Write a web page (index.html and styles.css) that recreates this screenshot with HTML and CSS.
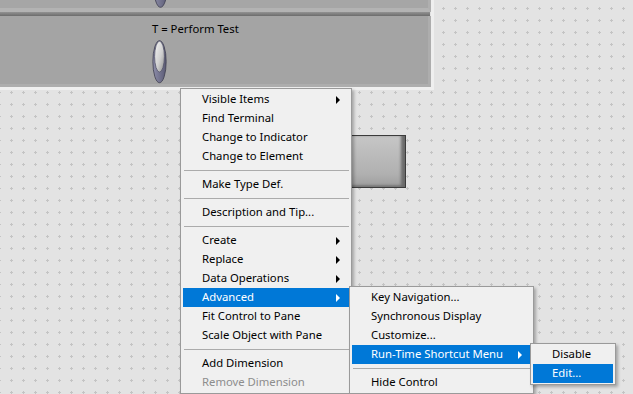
FILE: index.html
```html
<!DOCTYPE html>
<html lang="en">
<head>
<meta charset="utf-8">
<title>Front panel context menu</title>
<link rel="stylesheet" href="styles.css">
</head>
<body>
  <div class="frame">
    <div class="upper">
      <svg class="stub" width="16" height="8" viewBox="0 0 16 8">
        <defs>
          <linearGradient id="gb1" x1="0" y1="0" x2="1" y2="0">
            <stop offset="0" stop-color="#8c8ca6"/>
            <stop offset="1" stop-color="#5c5c76"/>
          </linearGradient>
        </defs>
        <ellipse cx="7.5" cy="-14" rx="6.8" ry="21.3" fill="url(#gb1)" stroke="#3e3e50" stroke-width="0.8"/>
        <ellipse cx="7.5" cy="-19" rx="5" ry="16" fill="#b8b8c0" stroke="#505062" stroke-width="0.8"/>
      </svg>
    </div>
    <div class="splitter"></div>
    <div class="lower">
      <div class="ctl-label">T = Perform Test</div>
      <svg class="switch" width="16" height="45" viewBox="0 0 16 45">
        <defs>
          <linearGradient id="gb2" x1="0" y1="0" x2="1" y2="0">
            <stop offset="0" stop-color="#8e8eaa"/>
            <stop offset="1" stop-color="#5a5a74"/>
          </linearGradient>
          <linearGradient id="gl2" x1="0" y1="0" x2="1" y2="1">
            <stop offset="0" stop-color="#f4f4f4"/>
            <stop offset="0.55" stop-color="#d0d0d0"/>
            <stop offset="1" stop-color="#8e8e8e"/>
          </linearGradient>
        </defs>
        <ellipse cx="7.5" cy="22.2" rx="6.8" ry="21.5" fill="url(#gb2)" stroke="#3c3c4e" stroke-width="0.8"/>
        <ellipse cx="7.5" cy="17" rx="5" ry="15.8" fill="url(#gl2)" stroke="#55556a" stroke-width="0.8"/>
      </svg>
    </div>
  </div>

  <div class="button"></div>

  <div class="menu main">
    <div class="item"><span class="label">Visible Items</span><span class="arrow"></span></div>
    <div class="item"><span class="label">Find Terminal</span></div>
    <div class="item"><span class="label">Change to Indicator</span></div>
    <div class="item"><span class="label">Change to Element</span></div>
    <div class="sep"></div>
    <div class="item"><span class="label">Make Type Def.</span></div>
    <div class="sep"></div>
    <div class="item"><span class="label">Description and Tip...</span></div>
    <div class="sep"></div>
    <div class="item"><span class="label">Create</span><span class="arrow"></span></div>
    <div class="item"><span class="label">Replace</span><span class="arrow"></span></div>
    <div class="item"><span class="label">Data Operations</span><span class="arrow"></span></div>
    <div class="item active"><span class="label">Advanced</span><span class="arrow"></span></div>
    <div class="item"><span class="label">Fit Control to Pane</span></div>
    <div class="item"><span class="label">Scale Object with Pane</span></div>
    <div class="sep"></div>
    <div class="item"><span class="label">Add Dimension</span></div>
    <div class="item disabled"><span class="label">Remove Dimension</span></div>
  </div>

  <div class="menu sub1">
    <div class="item"><span class="label">Key Navigation...</span></div>
    <div class="item"><span class="label">Synchronous Display</span></div>
    <div class="item"><span class="label">Customize...</span></div>
    <div class="item active"><span class="label">Run-Time Shortcut Menu</span><span class="arrow"></span></div>
    <div class="sep"></div>
    <div class="item"><span class="label">Hide Control</span></div>
  </div>

  <div class="menu sub2">
    <div class="item"><span class="label">Disable</span></div>
    <div class="item active"><span class="label">Edit...</span></div>
  </div>
</body>
</html>
```

FILE: styles.css
```css
html, body {
  margin: 0;
  padding: 0;
  width: 633px;
  height: 394px;
  overflow: hidden;
}

body {
  position: relative;
  background-color: #e3e3e3;
  background-image: url("data:image/svg+xml,%3Csvg xmlns='http://www.w3.org/2000/svg' width='12' height='12' shape-rendering='crispEdges'%3E%3Cpath d='M0 1h3v1H0zM1 0h1v3H1z' fill='%23c4c4c4'/%3E%3C/svg%3E");
  background-position: 10px 7px;
  font-family: "Noto Sans", "DejaVu Sans", sans-serif;
  font-size: 11.3px;
  color: #000;
}

/* front panel pane */
.frame {
  width: 431px;
  border-right: 3px solid #efefef;
  border-bottom: 3px solid #efefef;
}

.upper {
  height: 8px;
  background: #a6a6a6;
  border-right: 3px solid #afafaf;
  border-bottom: 4px solid #b3b3b3;
  padding-left: 153px;
  overflow: hidden;
}

.stub {
  display: block;
}

.splitter {
  height: 4px;
  margin-right: 1px;
  background: linear-gradient(#929292, #6c6c6c);
}

.lower {
  height: 63px;
  padding: 5px 0 0 152px;
  background: #a4a4a4;
  border-right: 3px solid #adadad;
  border-bottom: 3px solid #adadad;
  display: flex;
  flex-direction: column;
  align-items: flex-start;
}

.ctl-label {
  line-height: 15px;
  white-space: nowrap;
}

.switch {
  display: block;
  margin-top: 4px;
}

/* boolean button on the free canvas, partly under the menu */
.button {
  position: absolute;
  left: 330px;
  top: 135px;
  width: 74px;
  height: 51px;
  border: 1px solid #3b3b3b;
  background: linear-gradient(#c6c6c6, #b0b0b0 75%, #9c9c9c);
  box-shadow: inset -5px 0 3px -1px #6a6a6a, inset 0 -3px 2px -1px #7c7c7c;
}

/* context menus */
.menu {
  position: absolute;
  background: #f0f0f0;
  border: 1px solid #9a9a9a;
  padding: 1px 2px;
  box-shadow: 2px 2px 3px rgba(0, 0, 0, 0.28);
}

.main {
  left: 180px;
  top: 88px;
  width: 166px;
}

.sub1 {
  left: 349px;
  top: 286px;
  width: 179px;
}

.sub2 {
  left: 530px;
  top: 343px;
  width: 80px;
}

.item {
  display: flex;
  align-items: center;
  height: 19px;
  padding: 0 9px 0 19px;
  white-space: nowrap;
}

.item .label {
  flex: 1;
  line-height: 17px;
  margin-bottom: 2px;
}

.arrow {
  width: 0;
  height: 0;
  border-left: 4px solid #000;
  border-top: 4px solid transparent;
  border-bottom: 4px solid transparent;
}

.item.active {
  background: #0078d7;
  color: #fff;
}

.item.active .arrow {
  border-left-color: #fff;
}

.item.disabled {
  color: #8d8d8d;
}

.sep {
  height: 1px;
  margin: 4px 0 4px 1px;
  background: #ababab;
}
```
